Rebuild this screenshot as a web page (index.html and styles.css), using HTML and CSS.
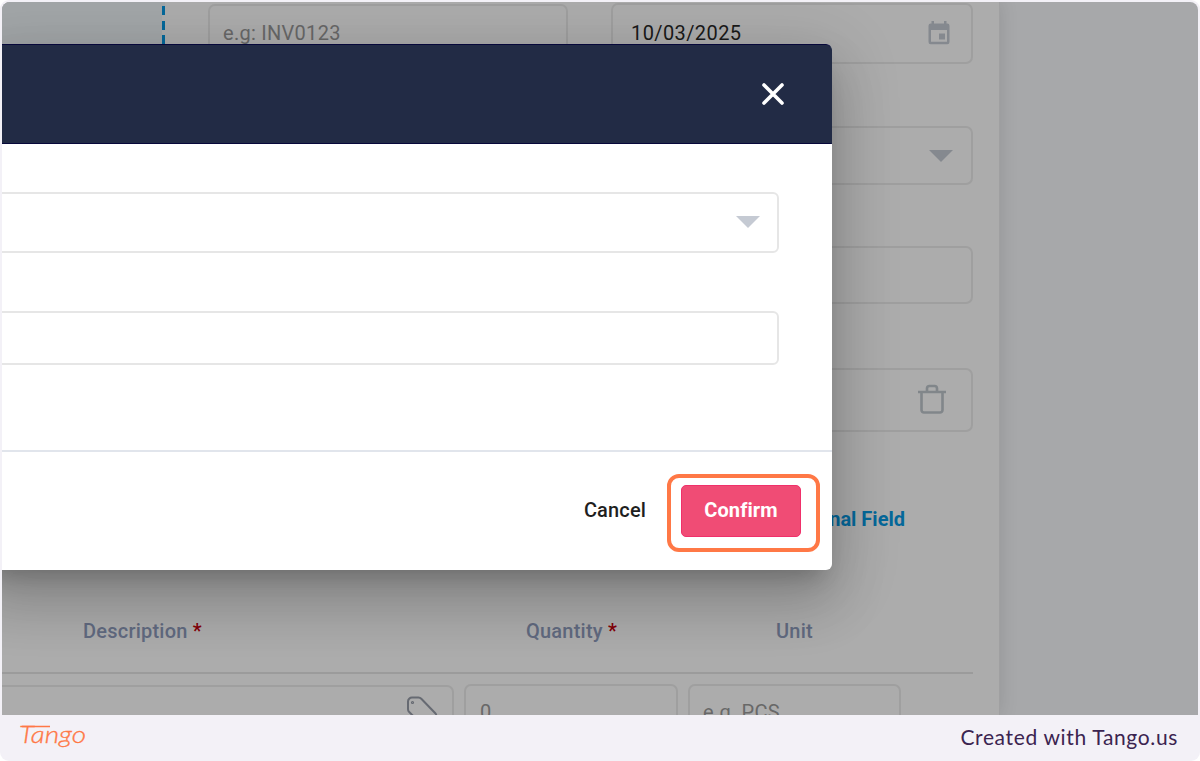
FILE: index.html
```
<!DOCTYPE html>
<html lang="en">
<head>
    <meta charset="UTF-8">
    <meta name="viewport" content="width=device-width, initial-scale=1.0">
    <title>Invoice</title>
    <link rel="stylesheet" href="styles.css">
</head>
<body>
    <div class="frame">
        <div class="screen">
            <div class="page">
                <div class="details">
                    <div class="dropzone"></div>
                    <div class="col-left">
                        <div class="field invoice">e.g: INV0123</div>
                    </div>
                    <div class="col-right">
                        <div class="field date">
                            <span>10/03/2025</span>
                            <svg class="calendar" width="22" height="24" viewBox="0 0 22 24">
                                <path fill-rule="evenodd" d="M3.500 0h2.500v2.500h10V0h2.500v2.500h.800A2.200 2.200 0 0 1 21.500 4.700V21a2.200 2.200 0 0 1-2.200 2.200H2.700A2.200 2.200 0 0 1 .5 21V4.700A2.200 2.200 0 0 1 2.700 2.500h.8zM3 9v11.800h16V9z"/>
                                <path d="M11 12.500h6v6h-6z"/>
                            </svg>
                        </div>
                        <div class="field select"><span class="caret"></span></div>
                        <div class="field plain"></div>
                        <div class="field extra">
                            <svg class="trash" width="30" height="30" viewBox="0 0 30 30">
                                <path d="M1 8h28M4.500 8v18a2.500 2.500 0 0 0 2.500 2.500h16a2.500 2.500 0 0 0 2.500-2.500V8M10 8V4.500A2.500 2.500 0 0 1 12.500 2h5A2.500 2.500 0 0 1 20 4.500V8"/>
                            </svg>
                        </div>
                        <div class="add-field">nal Field</div>
                    </div>
                </div>
                <div class="table-head">
                    <div class="th">Description <b>*</b></div>
                    <div class="th">Quantity <b>*</b></div>
                    <div class="th">Unit</div>
                </div>
                <div class="table-row">
                    <div class="field description">
                        <svg class="tag" width="36" height="36" viewBox="0 0 36 36">
                            <path d="M2 5.500A4 4 0 0 1 6 1.500h6.500a4 4 0 0 1 2.800 1.200l14 14.500a3.500 3.500 0 0 1 0 4.900l-7.500 7.500a3.500 3.500 0 0 1-5 0L3.200 16A4 4 0 0 1 2 13.200z"/>
                            <circle cx="6.500" cy="6.500" r=".6"/>
                        </svg>
                    </div>
                    <div class="field quantity">0</div>
                    <div class="field unit">e.g. PCS</div>
                </div>
            </div>

            <div class="modal">
                <div class="modal-header">
                    <svg class="close" width="24" height="24" viewBox="0 0 24 24">
                        <path d="M3 3l18 18M21 3L3 21"/>
                    </svg>
                </div>
                <div class="modal-body">
                    <div class="modal-field modal-select"><span class="caret"></span></div>
                    <div class="modal-field modal-input"></div>
                </div>
                <div class="modal-footer">
                    <div class="cancel">Cancel</div>
                    <div class="highlight">
                        <div class="confirm">Confirm</div>
                    </div>
                </div>
            </div>
        </div>

        <div class="footer">
            <svg class="logo" width="72" height="40" viewBox="0 0 72 40">
                <path d="M3 8.500h28"/>
                <text x="0" y="25" textLength="67" lengthAdjust="spacingAndGlyphs">Tango</text>
            </svg>
            <div class="credit">Created with Tango.us</div>
        </div>
    </div>
</body>
</html>
```
FILE: styles.css
```
* {
    box-sizing: border-box;
}
body {
    margin: 0;
    background: #fff;
    font-family: Roboto, sans-serif;
    font-size: 20px;
}
.frame {
    width: 1200px;
    height: 761px;
    padding: 2px 2px 0;
    background: #f3f1f7;
    border-radius: 9px;
    overflow: hidden;
}
.screen {
    position: relative;
    height: 713px;
    background: #a7a8aa;
    border-radius: 8px 8px 0 0;
    overflow: hidden;
}
.page {
    width: 998px;
    height: 713px;
    background: #acacac;
    border-right: 1px solid #a0a0a1;
    box-shadow: 0 0 18px rgba(0, 0, 0, 0.12);
    overflow: hidden;
}
.details {
    display: flex;
    height: 583px;
}
.dropzone {
    width: 163px;
    height: 300px;
    margin-right: 43px;
    background: repeating-linear-gradient(#05689a 0 9px, #acacac 9px 14.7px) right 4px / 3px 100% no-repeat, #a2a6a8;
}
.field {
    display: flex;
    align-items: center;
    border: 2px solid #9f9f9f;
    border-radius: 7px;
    color: #686868;
}
.col-left {
    width: 360px;
    padding-top: 2px;
    margin-right: 43px;
}
.invoice {
    height: 60px;
    padding: 0 13px 2px;
    letter-spacing: 0.28px;
}
.col-right {
    width: 362px;
    padding-top: 1px;
}
.date {
    height: 61px;
    justify-content: space-between;
    padding: 0 21px 2px 18px;
    color: #1a1a1a;
    letter-spacing: 0.4px;
}
.calendar {
    fill: #85898f;
}
.select {
    height: 59px;
    margin-top: 62px;
    justify-content: flex-end;
    padding-right: 18px;
}
.caret {
    border: 12px solid transparent;
    border-top-color: #85898f;
    border-bottom: 0;
}
.plain {
    height: 58px;
    margin-top: 61px;
}
.extra {
    height: 64px;
    margin-top: 64px;
    justify-content: flex-end;
    padding: 0 24px 2px 0;
}
.trash {
    fill: none;
    stroke: #81868a;
    stroke-width: 2.6;
}
.add-field {
    margin-top: 75px;
    padding-right: 68px;
    text-align: right;
    line-height: 24px;
    font-weight: 700;
    color: #05689a;
}
.table-head {
    display: grid;
    grid-template-columns: 443px 250px 1fr;
    width: 971px;
    height: 89px;
    padding-left: 81px;
    padding-top: 34px;
    border-bottom: 2px solid #9b9b9b;
    line-height: 25px;
    font-weight: 500;
    letter-spacing: 0.22px;
    color: #616a80;
}
.th b {
    color: #850008;
    font-weight: 500;
}
.table-row {
    display: flex;
    gap: 10px;
    padding-top: 10px;
    margin-left: -10px;
}
.table-row .field {
    height: 58px;
}
.table-row .description {
    width: 462px;
    margin-top: 1px;
    justify-content: flex-end;
    padding-right: 10px;
}
.tag {
    fill: none;
    stroke: #666a72;
    stroke-width: 2;
}
.table-row .quantity {
    width: 214px;
    padding: 0 0 2px 14px;
}
.table-row .unit {
    width: 213px;
    padding: 0 0 2px 13px;
    letter-spacing: 0.25px;
}

/* dialog over the form */
.modal {
    position: absolute;
    left: -20px;
    top: 42px;
    width: 850px;
    height: 526px;
    background: #fff;
    border-radius: 6px;
    box-shadow: 0 15px 21px -10px rgba(0, 0, 0, 0.2), 0 34px 53px 4px rgba(0, 0, 0, 0.14), 0 13px 64px 11px rgba(0, 0, 0, 0.12);
}
.modal-header {
    display: flex;
    align-items: center;
    justify-content: flex-end;
    height: 100px;
    padding-right: 46px;
    background: #222b45;
    border: 1px solid #07083a;
    border-right-color: #222b45;
    border-radius: 6px 6px 0 0;
}
.close {
    fill: none;
    stroke: #fff;
    stroke-width: 3.6;
    stroke-linecap: round;
}
.modal-body {
    height: 306px;
    padding: 48px 53px 0 0;
}
.modal-field {
    display: flex;
    justify-content: flex-end;
    border: 2px solid #e6e6e6;
    border-radius: 6px;
}
.modal-select {
    height: 61px;
    padding: 22px 17px 0 0;
}
.modal-select .caret {
    height: 12px;
    border-top-color: #c5cad3;
}
.modal-input {
    height: 54px;
    margin-top: 58px;
}
.modal-footer {
    display: flex;
    justify-content: flex-end;
    align-items: flex-start;
    gap: 21px;
    height: 120px;
    padding: 22px 12px 0 0;
    border-top: 2px solid #e1e5ec;
}
.cancel {
    margin-top: 24px;
    line-height: 24px;
    font-weight: 500;
    letter-spacing: 0.15px;
    color: #1f1f1f;
}
.highlight {
    width: 153px;
    height: 78px;
    padding: 7px 10px;
    border: 4px solid #ff7846;
    border-radius: 12px;
}
.confirm {
    width: 120px;
    height: 52px;
    line-height: 48px;
    text-align: center;
    font-weight: 700;
    letter-spacing: 0.1px;
    color: #fff;
    background: #f04c75;
    border: 1px solid #f0306a;
    border-radius: 5px;
}

.footer {
    display: flex;
    align-items: center;
    justify-content: space-between;
    height: 46px;
    padding: 0 20px 0 17px;
}
.logo {
    fill: none;
    stroke: #ff7846;
    stroke-width: 1.6;
    overflow: visible;
}
.logo text {
    font: italic 300 23px Lato, sans-serif;
    fill: #ff7846;
    stroke: #ff7846;
    stroke-width: 0.3;
}
.credit {
    padding-bottom: 3px;
    font-family: Lato, sans-serif;
    font-size: 21px;
    letter-spacing: 0.65px;
    color: #3b2450;
}
```
